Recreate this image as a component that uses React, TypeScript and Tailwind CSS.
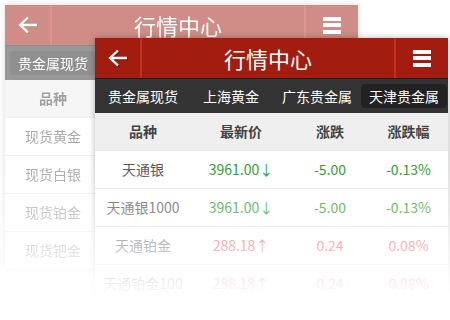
import React from 'react';

type Row = { name: string; price: string; change: string; pct: string; up?: boolean };

const frontRows: Row[] = [
  { name: '天通银', price: '3961.00↓', change: '-5.00', pct: '-0.13%' },
  { name: '天通银1000', price: '3961.00↓', change: '-5.00', pct: '-0.13%' },
  { name: '天通铂金', price: '288.18↑', change: '0.24', pct: '0.08%', up: true },
  { name: '天通铂金100', price: '288.18↑', change: '0.24', pct: '0.08%', up: true },
];

const backRows: Row[] = [
  { name: '现货黄金', price: '1260.66↓', change: '-1.05', pct: '-0.08%' },
  { name: '现货白银', price: '16.81↓', change: '-0.02', pct: '-0.10%' },
  { name: '现货铂金', price: '1491.29↓', change: '-0.73', pct: '-0.05%' },
  { name: '现货钯金', price: '788.50↓', change: '-3.29', pct: '-0.41%' },
];

const tabs = [
  { label: '贵金属现货', ml: 'ml-[5px]' },
  { label: '上海黄金', ml: 'ml-[9px]' },
  { label: '广东贵金属', ml: 'ml-[7px]' },
  { label: '天津贵金属', ml: 'ml-[1px]' },
];

const cols = 'grid grid-cols-[96px_100px_78px_1fr] items-center text-center';

// --- one phone screen --- //
const Screen = ({ rows, active, rowBg }: { rows: Row[]; active: number; rowBg: string }) => (
  <div className="w-[353px] flex flex-col bg-white shadow-[0_0_6px_rgba(0,0,0,0.3)]">
    {/* header */}
    <div className="h-[40px] flex bg-[#a31c10] text-white">
      <div className="w-[47px] flex items-center justify-center border-r-2 border-[#c62c1f]">
        <svg width="20" height="18" viewBox="0 0 20 18" className="drop-shadow-[1px_1px_0_rgba(0,0,0,0.35)]">
          <path d="M10 1.5 L2.2 9 L10 16.5 M2.2 9 H19" fill="none" stroke="#fff" strokeWidth="2.4" />
        </svg>
      </div>
      <div className="flex-1 flex items-center justify-center text-[22px] leading-none">行情中心</div>
      <div className="w-[54px] flex items-center justify-center border-l-2 border-[#c62c1f]">
        <div className="flex flex-col gap-[2.5px]">
          <div className="w-[18px] h-[4px] bg-white" />
          <div className="w-[18px] h-[4px] bg-white" />
          <div className="w-[18px] h-[4px] bg-white" />
        </div>
      </div>
    </div>

    {/* tabs */}
    <div className="h-[35px] flex items-center bg-[#333] border-t border-[#1e1e1e] text-[14px] text-white whitespace-nowrap overflow-hidden">
      {tabs.map((t, i) => (
        <div
          key={t.label}
          className={`${t.ml} px-[8px] h-[24px] flex items-center rounded-[4px] ${i === active ? 'bg-[#222]' : ''}`}
        >
          {t.label}
        </div>
      ))}
    </div>

    {/* table head */}
    <div className={`${cols} h-[37px] bg-[#efefef] text-[14px] font-bold text-[#444]`}>
      <div>品种</div>
      <div>最新价</div>
      <div>涨跌</div>
      <div>涨跌幅</div>
    </div>

    {/* rows */}
    {rows.map((r) => (
      <div key={r.name} className={`${cols} h-[38px] border-t border-[#e4e4e4] text-[14px] ${rowBg}`}>
        <div className="text-[#555]">{r.name}</div>
        <div className={r.up ? 'text-[#f03c3c]' : 'text-[#2a9a2a]'}>{r.price}</div>
        <div className={r.up ? 'text-[#f03c3c]' : 'text-[#2a9a2a]'}>{r.change}</div>
        <div className={r.up ? 'text-[#f03c3c]' : 'text-[#2a9a2a]'}>{r.pct}</div>
      </div>
    ))}
  </div>
);

export default function App() {
  return (
    <div
      className="relative w-[450px] h-[320px] overflow-hidden bg-white"
      style={{ fontFamily: '"Noto Sans CJK SC", "Noto Sans", sans-serif' }}
    >
      {/* back screen, dimmed */}
      <div className="absolute left-[5px] top-[5px] opacity-50">
        <Screen rows={backRows} active={0} rowBg="bg-white" />
      </div>

      {/* front screen */}
      <div className="absolute left-[95px] top-[38px]">
        <Screen rows={frontRows} active={3} rowBg="bg-white/90" />
      </div>

      {/* fade to white at the bottom */}
      <div className="absolute left-0 right-0 top-[165px] bottom-0 bg-[linear-gradient(to_bottom,rgba(255,255,255,0)_0%,rgba(255,255,255,0.6)_52%,rgba(255,255,255,0.92)_78%,#fff_90%)] pointer-events-none" />
    </div>
  );
}
